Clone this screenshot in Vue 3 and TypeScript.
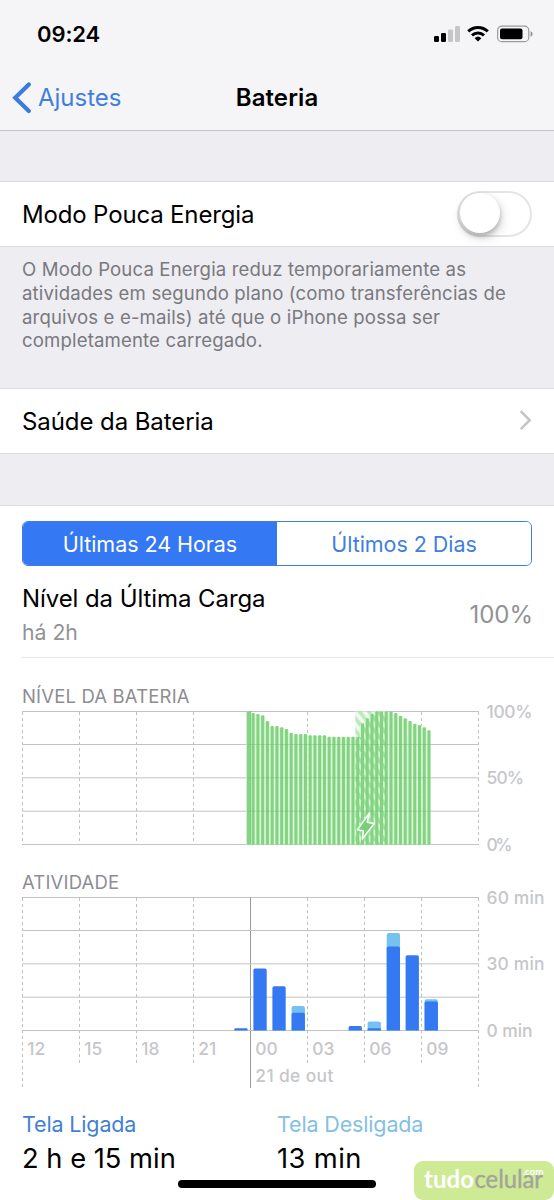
<script setup lang="ts">
const columns = [22.5, 79.5, 136.5, 193.5, 250.5, 307.5, 364.5, 421.5, 478.5]
const hours = ['12', '15', '18', '21', '00', '03', '06', '09']

const levelRows = [0.5, 33.5, 66.8, 100.2, 133.5]
const levelTops = [
  0.5, 2, 3, 4.3, 10, 15, 15, 16.3, 18, 21.7, 23, 23, 23, 24.3, 24.3, 24.3, 24.3,
  25.7, 25.7, 25.7, 25.7, 25.7, 25.7, 25.7, 12.3, 7.3, 3, 0.5, 0.5, 0.5, 0.5,
  2, 4.7, 7.3, 10, 12.7, 14, 16.3, 19.3,
]
const levels = levelTops.map((top, i) => ({ x: 248.4 + i * 4.753, top }))
const barPath = (x: number, top: number, w: number, base: number, r: number) =>
  `M${x} ${base}V${top + r}q0 ${-r} ${r} ${-r}h${w - 2 * r}q${r} 0 ${r} ${r}V${base}z`

const activityRows = [0.5, 33.5, 66.8, 100.2, 133.5]
interface Usage { x: number; on: number; off: number }
const usage: Usage[] = [
  { x: 234.3, on: 2.2, off: 2.2 },
  { x: 253.4, on: 62, off: 62 },
  { x: 272.4, on: 44.3, off: 44.3 },
  { x: 291.6, on: 17.7, off: 24.4 },
  { x: 348.6, on: 4.4, off: 4.4 },
  { x: 367.6, on: 2.2, off: 9 },
  { x: 386.7, on: 84, off: 97.5 },
  { x: 405.6, on: 75.3, off: 75.3 },
  { x: 424.6, on: 29, off: 31.3 },
]
</script>

<template>
  <main class="screen">
    <header class="top">
      <div class="status">
        <span class="clock">09:24</span>
        <svg class="indicators" width="100" height="18" viewBox="0 0 100 18">
          <rect x="0" y="11" width="5" height="6" rx="1.3" />
          <rect x="7" y="8" width="5" height="9" rx="1.3" />
          <rect x="14" y="4.5" width="5" height="12.5" rx="1.3" fill="#c6c6c9" />
          <rect x="21" y="1" width="5" height="16" rx="1.3" fill="#c6c6c9" />
          <g fill="none" stroke="#000" stroke-width="3">
            <path d="M34.2 6.3a14.2 14.2 0 0 1 19.6 0" />
            <path d="M38 10.4a8.8 8.8 0 0 1 12 0" />
          </g>
          <path d="M40.6 13.2a5 5 0 0 1 6.8 0L44 16.6z" />
          <rect x="63.6" y="1.2" width="31.2" height="15.4" rx="4.2" fill="none" stroke="#9c9c9f" stroke-width="1.2" />
          <rect x="66" y="3.5" width="22.5" height="10.8" rx="2" />
          <path d="M96.6 6.2q2 .6 2 2.8t-2 2.8z" fill="#8f8f92" />
        </svg>
      </div>
      <div class="nav">
        <a class="back">
          <svg width="20" height="32" viewBox="0 0 20 32"><path d="M16.8 2.5 3.2 15.8 16.8 29.1" fill="none" stroke="#3b7bdf" stroke-width="4.2" stroke-linecap="round" stroke-linejoin="miter" /></svg>
          <span>Ajustes</span>
        </a>
        <h1>Bateria</h1>
      </div>
    </header>

    <section class="row power">
      <span class="label low">Modo Pouca Energia</span>
      <span class="toggle"><i></i></span>
    </section>
    <p class="note">
      O Modo Pouca Energia reduz temporariamente as<br />
      atividades em segundo plano (como transferências de<br />
      arquivos e e-mails) até que o iPhone possa ser<br />
      completamente carregado.
    </p>
    <section class="row health">
      <span class="label">Saúde da Bateria</span>
      <svg width="14" height="22" viewBox="0 0 14 22"><path d="m2.7 1.2 9 9-9 9" fill="none" stroke="#c5c5c9" stroke-width="2.6" /></svg>
    </section>

    <section class="panel">
      <div class="segments">
        <button class="on"><span>Últimas 24 Horas</span></button>
        <button><span>Últimos 2 Dias</span></button>
      </div>
      <div class="charge">
        <div>
          <div class="label last">Nível da Última Carga</div>
          <div class="ago">há 2h</div>
        </div>
        <span class="pct">100%</span>
      </div>

      <h2 class="h-level"><span>NÍVEL DA BATERIA</span></h2>
      <svg class="chart" width="554" height="150" viewBox="0 0 554 150">
        <defs>
          <pattern id="hatch" width="7.4" height="7.4" patternUnits="userSpaceOnUse" patternTransform="rotate(-38)">
            <rect width="7.4" height="7.4" fill="#eefaee" />
            <rect width="3.5" height="7.4" fill="#bde9bd" />
          </pattern>
          <pattern id="hatch-dark" width="7.4" height="7.4" patternUnits="userSpaceOnUse" patternTransform="rotate(-38)">
            <rect width="3.5" height="7.4" fill="#a2dfa2" />
          </pattern>
        </defs>
        <line v-for="x in columns" :key="x" :x1="x" :x2="x" y1="1" y2="133" class="dash" />
        <line v-for="y in levelRows" :key="y" x1="22" x2="479" :y1="y" :y2="y" class="grid" />
        <rect x="355.3" y="0.5" width="30.5" height="133" fill="url(#hatch)" />
        <rect v-for="b in levels" :key="b.x" :x="b.x - 2.38" :y="b.top + 0.5" :width="b.x > 428 ? 3.8 : 4.76" :height="133.5 - b.top" fill="#d7f4d6" />
        <path d="M355.3 133.5V26H362.2V13H367V8H371.7V3H376V1H387V133.5z" fill="url(#hatch-dark)" />
        <path v-for="b in levels" :key="b.x" :d="barPath(b.x - 1.5, b.top, 3, 133.5, 1)" fill="#82d480" />
        <line v-for="y in levelRows.slice(1)" :key="y" x1="247" x2="430" :y1="y" :y2="y" stroke="#5fa763" stroke-opacity=".28" />
        <line x1="250.5" x2="250.5" y1="0" y2="133" stroke="#55af59" stroke-opacity=".65" />
        <path d="M369 102.5 357.4 118.8l6 1.2-1.1 8 12-15.4-7-1.5z" fill="#79cf78" stroke="#f7fff7" stroke-width="1.6" stroke-linejoin="round" />
        <text x="486.5" y="6.6" textLength="46">100%</text>
        <text x="486.5" y="72.9" textLength="37.5">50%</text>
        <text x="486.5" y="139.6" textLength="26">0%</text>
      </svg>

      <h2 class="h-activity"><span>ATIVIDADE</span></h2>
      <svg class="chart" width="554" height="195" viewBox="0 0 554 195">
        <line v-for="(x, i) in columns" :key="x" :x1="x" :x2="x" y1="1" :y2="i % 4 === 0 ? 191 : 167" :class="i === 4 ? 'day' : 'dash'" />
        <line v-for="y in activityRows" :key="y" x1="22" x2="479" :y1="y" :y2="y" class="grid" />
        <g v-for="u in usage" :key="u.x">
          <path v-if="u.off > u.on" :d="barPath(u.x, 133.5 - u.off, 13.3, 133.5, 2)" fill="#75c1f2" />
          <path :d="barPath(u.x, 133.5 - u.on, 13.3, 133.5, Math.min(1.7, u.on / 2))" fill="#3478f2" />
        </g>
        <text v-for="(h, i) in hours" :key="h" :x="columns[i] + 4.7" y="157.5">{{ h }}</text>
        <text x="255.3" y="184.5" textLength="78">21 de out</text>
        <text x="486.5" y="6.6" textLength="58">60 min</text>
        <text x="486.5" y="72.9" textLength="58">30 min</text>
        <text x="486.5" y="139.6" textLength="46">0 min</text>
      </svg>

      <div class="totals">
        <div><div class="t-name">Tela Ligada</div><div class="t-val">2 h e 15 min</div></div>
        <div class="off"><div class="t-name">Tela Desligada</div><div class="t-val">13 min</div></div>
      </div>
    </section>

    <div class="home-bar"></div>
    <div class="brand">
      <svg width="140" height="39" viewBox="0 0 140 39">
        <text x="10" y="27.4" textLength="50" lengthAdjust="spacingAndGlyphs" class="tudo">tudo</text>
        <text x="60.5" y="27.4" textLength="68.5" lengthAdjust="spacingAndGlyphs" class="celular">celular</text>
        <text x="108.5" y="14" textLength="21" lengthAdjust="spacingAndGlyphs" class="com">.com</text>
      </svg>
    </div>
  </main>
</template>

<style>
body { margin: 0; overflow: hidden; }
</style>

<style scoped>
.screen {
  position: relative;
  width: 554px;
  height: 1200px;
  overflow: hidden;
  box-sizing: border-box;
  background: #eeedf2;
  color: #000;
  font-family: Inter, "Liberation Sans", sans-serif;
}
span, .label, .t-name, .t-val, .ago { white-space: nowrap; }
svg { display: block; flex: none; }
.top { height: 130px; background: #f5f5f7; border-bottom: 1px solid #c4c3c9; }
.status { display: flex; justify-content: space-between; height: 68px; padding: 0 20px 0 37px; align-items: center; }
.clock { font-size: 22px; font-weight: 600; letter-spacing: -.1px; line-height: 30px; }
.nav { display: grid; grid-template-columns: 1fr auto 1fr; align-items: center; height: 60px; padding: 0 12px; }
.back { display: flex; align-items: center; gap: 6px; color: #3f80df; font-size: 24px; }
.back span { padding-bottom: 2px; }
h1 { margin: 0; padding-bottom: 2px; font-size: 24px; font-weight: 600; letter-spacing: .1px; }
.row { display: flex; justify-content: space-between; align-items: center; box-sizing: border-box; height: 66px; padding: 0 22px; background: #fff; border: solid #dcdbe0; border-width: 1px 0; }
.power { margin-top: 50px; }
.label { font-size: 24px; line-height: 30px; letter-spacing: -.08px; }
.row .label { padding-top: 2px; }
.low { letter-spacing: -.16px; }
.toggle { box-sizing: border-box; width: 75px; height: 46px; border: 2px solid #e5e5e5; border-radius: 23px; }
.toggle i { display: block; width: 40px; height: 40px; margin: 0 1px; border-radius: 50%; background: #fff; box-shadow: 0 3px 5px rgba(0,0,0,.25), 2px 5px 12px rgba(0,0,0,.14); }
.note { margin: 0; height: 141px; box-sizing: border-box; padding: 11px 22px 0; color: #79797e; font-size: 18.6px; line-height: 23.8px; letter-spacing: .14px; white-space: nowrap; }
.health { padding-right: 22px; }
.panel { margin-top: 51px; height: 696px; background: #fff; border-top: 1px solid #dcdbe0; }
.segments { display: flex; margin: 15px 22px 0; height: 45px; box-sizing: border-box; border: 1.5px solid #3f7fe2; border-radius: 6px; overflow: hidden; }
.segments button { flex: 1; padding: 0; border: 0; background: #fff; color: #3f7fdf; font: 400 21.5px Inter, sans-serif; letter-spacing: -.05px; }
.segments .on { background: #3478f3; color: #fff; }
.charge { display: flex; justify-content: space-between; align-items: center; height: 92px; box-sizing: border-box; margin-left: 22px; padding: 6px 21px 0 0; border-bottom: 1px solid #e6e6e9; }
.ago { margin-top: 4px; margin-bottom: -1px; font-size: 21.2px; line-height: 28px; color: #929297; }
.pct { font-size: 24px; color: #919196; }
h2 { margin: 0 0 0 22px; font-size: 18.5px; font-weight: 400; line-height: 24px; color: #8d8d92; letter-spacing: .16px; }
.h-level { padding-top: 26px; height: 27px; }
.h-activity { padding-top: 9px; height: 27px; }
.chart { overflow: visible; font-size: 17.4px; font-weight: 500; fill: #c6c6ca; }
.grid { stroke: #c2c2c4; stroke-width: 1; }
.dash { stroke: #c0c0c2; stroke-width: 1; stroke-dasharray: 3 3; }
.day { stroke: #99999d; stroke-width: 1; }
.totals { display: grid; grid-template-columns: 255px 1fr; padding-left: 22px; margin-top: 18px; }
.t-name { font-size: 21.5px; line-height: 28px; color: #437fd8; letter-spacing: -.15px; }
.off .t-name { color: #83c0e5; }
.t-val { margin-top: 4px; font-size: 27.3px; line-height: 34px; }
.off .t-val { letter-spacing: .4px; }
.home-bar { position: absolute; left: 178px; top: 1180px; width: 198px; height: 8px; border-radius: 4px; background: #000; }
.brand { position: absolute; left: 414px; top: 1161px; width: 140px; height: 39px; border-radius: 9px; background: #cfea94; }
.brand text { font-family: Lato, sans-serif; }
.tudo { font-size: 25px; font-weight: 700; fill: #fff; }
.celular { font-size: 25px; font-weight: 400; fill: #a2a59b; stroke: #a2a59b; stroke-width: .4px; }
.com { font-size: 9.5px; font-weight: 700; fill: #fff; }
</style>
